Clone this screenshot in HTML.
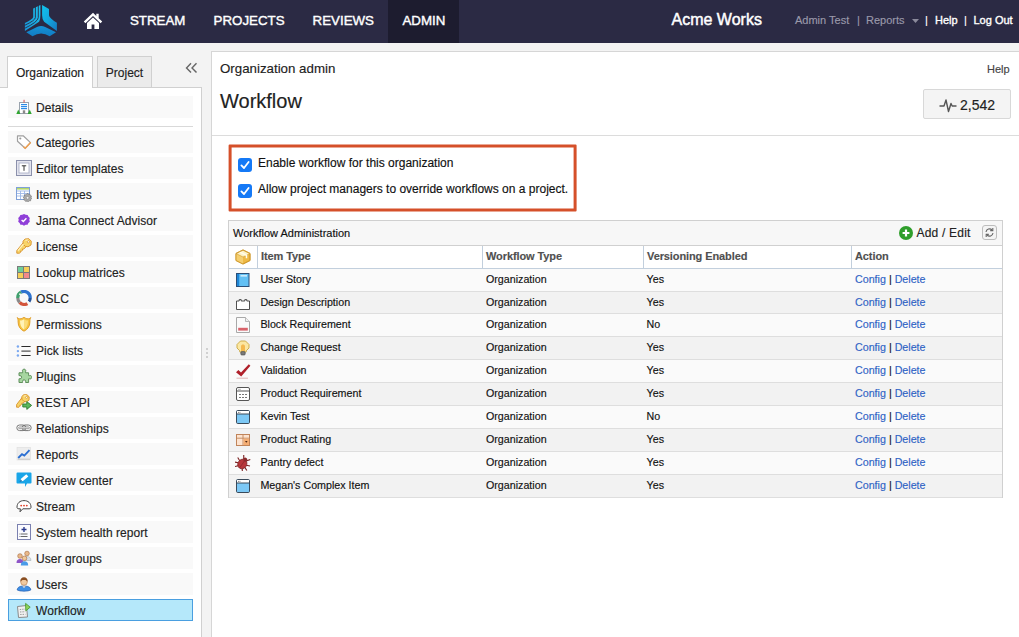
<!DOCTYPE html>
<html lang="en"><head><meta charset="utf-8"><title>Workflow - Organization admin</title>
<style>
*{box-sizing:border-box;margin:0;padding:0}
html,body{width:1019px;height:637px;overflow:hidden}
body{font-family:"Liberation Sans",Arial,sans-serif;background:#f3f3f3;color:#222;position:relative;font-size:12px;-webkit-text-stroke:.15px}
.abs{position:absolute}
#hdr{position:absolute;left:0;top:0;width:1019px;height:43px;background:#2b2a44}
#hdr .nav{position:absolute;top:0;height:43px;line-height:42px;color:#fff;font-size:13.3px;font-weight:normal;-webkit-text-stroke:.4px #fff;white-space:nowrap}
#hdr .act{position:absolute;left:388px;top:0;width:71px;height:43px;background:#1d1c2f}
#hdr .r{position:absolute;top:0;height:43px;line-height:41px;font-size:11px;white-space:nowrap}
.g{color:#9a99aa}.w{color:#fff}
/* sidebar */
#side{position:absolute;left:0;top:87px;width:202px;height:560px;background:#fff;border-top:1px solid #d0d0d0;border-right:1px solid #d0d0d0}
.tab{position:absolute;top:56px;height:31px;border:1px solid #d0d0d0;border-bottom:none;font-size:12px;line-height:32px;text-align:center;color:#222}
#t1{left:7px;width:86px;background:#fff;height:32px;z-index:2}
#t2{left:97px;width:55px;background:#ebebeb}
.it{position:absolute;left:8px;width:185px;height:22px;background:#f9f9f9;font-size:12px;letter-spacing:.05px;line-height:25px;padding-left:28px;color:#222;white-space:nowrap}
.it svg{position:absolute;left:8px;top:3px;width:16px;height:16px}
.it.sel{background:#b5e8fa;border:1px solid #4a9fe0;padding-left:27px;line-height:23px}
.it.sel svg{left:7px;top:2px}
#sep{position:absolute;left:8px;top:126px;width:185px;height:1px;background:#d9d9d9}
/* main */
#main{position:absolute;left:211px;top:51px;width:820px;height:600px;background:#fff;border:1px solid #d6d6d6}
#mline{position:absolute;left:212px;top:135px;width:807px;height:1px;background:#dcdcdc}
#redbox{position:absolute;left:229px;top:145px;width:348px;height:67px;border:3px solid #d5502a;border-radius:1px;transform:translate(-.4px,-.6px)}
.cb{position:absolute;left:238px;width:14px;height:14px;border-radius:3px;background:#1579f6}
.cb svg{position:absolute;left:0;top:0}
.cl{position:absolute;left:258px;font-size:12px;color:#111;white-space:nowrap}
/* grid */
#grid{position:absolute;left:228px;top:220px;width:775px;height:278px;border:1px solid #d0d0d0;background:#fff}
#gtitle{position:absolute;left:0;top:0;width:773px;height:25px;background:#f7f7f7;border-bottom:1px solid #d0d0d0;font-size:11px;line-height:24px;padding-left:4px;color:#111}
#ghead{position:absolute;left:0;top:25px;width:773px;height:23px;background:#fff;border-bottom:1px solid #c2cfdd}
.hc{position:absolute;top:0;height:22px;line-height:21px;font-size:11px;font-weight:bold;color:#505050;padding-left:3px;border-left:1px solid #c2cfdd;letter-spacing:-.1px}
.row{position:absolute;left:0;width:773px;border-bottom:1px solid #dedede;font-size:10.7px;color:#111}
.row.a{background:#fafafa}.row.b{background:#f2f2f2}
.row span{position:absolute;top:0;line-height:20px;white-space:nowrap}
.row svg{position:absolute;left:6px;top:3px;width:16px;height:16px}
.lnk{color:#2f63c5}
</style></head><body>
<div id="hdr">
 <div class="act"></div>
 <svg class="abs" style="left:20px;top:0px" width="44" height="42" viewBox="0 0 44 42">
  <defs><linearGradient id="lg1" x1="0" y1="0" x2="1" y2="1"><stop offset="0" stop-color="#10c4ee"/><stop offset=".5" stop-color="#14a6de"/><stop offset="1" stop-color="#1479c2"/></linearGradient>
  <linearGradient id="lg3" x1="1" y1="0" x2="0" y2="1"><stop offset="0" stop-color="#1cc2ee"/><stop offset="1" stop-color="#1795d8"/></linearGradient>
  <linearGradient id="lg2" x1="0" y1="0" x2="0" y2="1"><stop offset="0" stop-color="#1692d6"/><stop offset="1" stop-color="#117cc4"/></linearGradient></defs>
  <path d="M22.1 4.9 L29 8.9 V15.2 Q29.2 18 36.9 22.8 V31 L24.1 21.8 Q22.1 19.5 22.1 15.2 Z" fill="url(#lg1)"/>
  <path d="M20.4 4.9 L13.2 8.6 V17 Q13 19 4.9 23.1 V31 L19.1 21.8 Q20.4 19.5 20.4 15.2 Z" fill="url(#lg3)"/>
  <path d="M15.4 6.5 V17.5 Q15.2 20.5 4.5 25.4 M18.3 5 V17.5 Q18 22 4.5 28.4" fill="none" stroke="#2b2a44" stroke-width=".9"/>
  <path d="M6.3 32.3 L17 27 Q21.1 25 25.2 27 L36 32.3 L29.7 36.3 Q21.1 30.5 12.5 36.3 Z" fill="url(#lg2)"/>
 </svg>
 <svg class="abs" style="left:83px;top:12px" width="20" height="18" viewBox="0 0 20 18"><path d="M10 0.8 L0.8 9.5 L2.4 11.2 L10 4 L17.6 11.2 L19.2 9.5 L15.7 6.2 V1.8 H13.3 V3.9 Z" fill="#fff"/><path d="M10 5.4 L4 11 V17 H8.6 V12.4 H11.4 V17 H16 V11 Z" fill="#fff"/></svg>
 <div class="nav" style="left:130px">STREAM</div>
 <div class="nav" style="left:213.6px">PROJECTS</div>
 <div class="nav" style="left:312.6px">REVIEWS</div>
 <div class="nav" style="left:402.5px">ADMIN</div>
 <div class="nav" style="left:671.5px;font-size:16px;line-height:40px;-webkit-text-stroke:.45px #fff">Acme Works</div>
 <div class="r g" style="left:795px">Admin Test</div>
 <div class="r g" style="left:857px">|</div>
 <div class="r g" style="left:866px">Reports</div>
 <svg class="abs" style="left:911.5px;top:18.5px" width="7" height="4" viewBox="0 0 7 4"><path d="M0 0H7L3.5 4Z" fill="#8b8a9c"/></svg>
 <div class="r w" style="left:925px">|</div>
 <div class="r w" style="left:935px;-webkit-text-stroke:.35px #fff">Help</div>
 <div class="r w" style="left:964px">|</div>
 <div class="r w" style="left:973.5px;-webkit-text-stroke:.35px #fff">Log Out</div>
</div>

<div class="tab" id="t1">Organization</div>
<div class="tab" id="t2">Project</div>
<svg class="abs" style="left:185px;top:62px" width="13" height="12" viewBox="0 0 13 12"><path d="M6 1.2L1.5 5.9L6 10.6M11.5 1.2L7 5.9L11.5 10.6" fill="none" stroke="#666" stroke-width="1.4"/></svg>
<div id="side"></div>
<div id="sep"></div>
<div class="it" style="top:96px"><svg viewBox="0 0 16 16" ><rect x="3.5" y="3.5" width="9" height="11" fill="#fff" stroke="#9aa3ad" stroke-width="1"/><rect x="5" y="5" width="6" height="1.2" fill="#2f8be6"/><rect x="5" y="7" width="6" height="1.2" fill="#2f8be6"/><rect x="5" y="9" width="6" height="1.2" fill="#2f8be6"/><rect x="6.8" y="11.3" width="2.4" height="3.2" fill="#8a8a8a"/><path d="M0.3 15L2.3 10.5L4.3 15Z" fill="#2fa52f"/><path d="M11.7 15L13.7 10.5L15.7 15Z" fill="#2fa52f"/><rect x="7.6" y="0.8" width=".9" height="2.6" fill="#d33"/></svg>Details</div>
<div class="it" style="top:131px"><svg viewBox="0 0 16 16" ><path d="M1.5 1.8H7.2L14.5 8.6L9.2 14.3L1.5 7.2Z" fill="#fff" stroke="#a0a0a0" stroke-width="1.2" stroke-linejoin="round"/><path d="M14.3 8.8L9.2 14.3L7.8 13" fill="none" stroke="#f0a050" stroke-width="1.5" stroke-linecap="round"/><circle cx="4.3" cy="4.5" r="1.1" fill="#999"/></svg>Categories</div>
<div class="it" style="top:157px"><svg viewBox="0 0 16 16" ><rect x="0.5" y="0.5" width="15" height="15" fill="#e3e4ee" stroke="#8b90ab"/><rect x="3" y="3" width="10" height="10" fill="#fff" stroke="#a3a8c0" stroke-width=".8"/><path d="M5.8 5.8H10.2M8 5.8V10.8" stroke="#333" stroke-width="1" fill="none"/></svg>Editor templates</div>
<div class="it" style="top:183px"><svg viewBox="0 0 16 16" ><rect x="0.5" y="1.5" width="13" height="12" fill="#fff" stroke="#7fa0d8"/><rect x="1" y="2" width="12" height="1.6" fill="#b5d86a"/><path d="M1 5H13M1 7.5H13M1 10H13M4.5 5V13M8.5 5V13" stroke="#9db8e8" stroke-width=".9"/><path d="M11.5 7.2L12.4 8.3L13.8 8L14.2 9.4L15.5 10L15 11.3L15.8 12.5L14.7 13.4L14.6 14.8L13.2 14.8L12.2 15.8L11 15L9.7 15.5L9 14.3L7.7 13.8L8 12.4L7.3 11.2L8.4 10.3L8.5 8.9L9.9 8.8Z" fill="#aaa" stroke="#6e6e6e" stroke-width=".6"/><circle cx="11.6" cy="11.8" r="1.4" fill="#f0f0f0" stroke="#777" stroke-width=".5"/></svg>Item types</div>
<div class="it" style="top:209px"><svg viewBox="0 0 16 16" ><path d="M8 2L9.7 2.8L11.6 2.9L12.4 4.6L13.8 5.9L13.3 7.8L13.8 9.7L12.4 11L11.6 12.7L9.7 12.8L8 13.8L6.3 12.8L4.4 12.7L3.6 11L2.2 9.7L2.7 7.8L2.2 5.9L3.6 4.6L4.4 2.9L6.3 2.8Z" fill="#8f3fd8"/><path d="M5.6 8L7.3 9.6L10.4 6.3" fill="none" stroke="#fff" stroke-width="1.4"/></svg>Jama Connect Advisor</div>
<div class="it" style="top:235px"><svg viewBox="0 0 16 16" ><path d="M7.6 4.2L0.8 12.6V15.2H3.6L4.4 14.4V13.1H5.7L6.5 12.3V11H7.8L10.8 8.2Z" fill="#f8d468" stroke="#d8922c" stroke-width=".9" stroke-linejoin="round"/><path d="M9 1L12.8 0.7L15.3 3.2L15 7L12 8.8L9.4 8.4L7.2 6.2L7 3.2Z" fill="#f8d468" stroke="#d8922c" stroke-width=".9" stroke-linejoin="round"/><path d="M9.4 2.2L12.2 2M7.6 5.8L2 12.6" fill="none" stroke="#fff3c4" stroke-width="1.1"/><circle cx="12.4" cy="3.8" r="1.1" fill="#fff" stroke="#d8922c" stroke-width=".7"/></svg>License</div>
<div class="it" style="top:261px"><svg viewBox="0 0 16 16" ><rect x="1" y="2" width="13" height="13" fill="#7a7a7a"/><rect x="2" y="3" width="5" height="5" fill="#6fcf9a"/><rect x="8" y="3" width="5" height="5" fill="#f6cf58"/><rect x="2" y="9" width="5" height="5" fill="#f6cf58"/><rect x="8" y="9" width="5" height="5" fill="#f28a8a"/></svg>Lookup matrices</div>
<div class="it" style="top:287px"><svg viewBox="0 0 16 16" ><path d="M5 2.2A6.2 6.2 0 0 1 14.2 8" fill="none" stroke="#2f74cf" stroke-width="3.2"/><path d="M14.2 8A6.2 6.2 0 0 1 13 11.6" fill="none" stroke="#26549a" stroke-width="3.2"/><path d="M11.4 13.6A6.2 6.2 0 0 1 3.6 12.4" fill="none" stroke="#d3553c" stroke-width="3.2"/><path d="M3.6 12.4A6.2 6.2 0 0 1 1.8 8" fill="none" stroke="#8a8a8a" stroke-width="3.2"/><path d="M1.8 8A6.2 6.2 0 0 1 5 2.2" fill="none" stroke="#3fa06d" stroke-width="3.2"/><path d="M3.4 3.6L12.6 12.6" stroke="#f7f7f7" stroke-width="1.6"/></svg>OSLC</div>
<div class="it" style="top:313px"><svg viewBox="0 0 16 16" ><path d="M1.2 1.6C2.4 2.6 3 2.8 4 2.8C5.5 2.8 6.8 2.2 8 1.2C9.2 2.2 10.5 2.8 12 2.8C13 2.8 13.6 2.6 14.8 1.6C14 3 13.9 4 13.9 6C13.9 10.5 11.5 13.6 8 15.2C4.5 13.6 2.1 10.5 2.1 6C2.1 4 2 3 1.2 1.6Z" fill="#f6c544" stroke="#df9a24" stroke-width=".9" stroke-linejoin="round"/><path d="M8 3.2C6.9 4 5.6 4.5 4 4.5C3.9 9 5.3 11.8 8 13.4Z" fill="#fff2b8"/><path d="M8 3.2C9.1 4 10.4 4.5 12 4.5C12.1 9 10.7 11.8 8 13.4Z" fill="#fbdc7a"/></svg>Permissions</div>
<div class="it" style="top:339px"><svg viewBox="0 0 16 16" ><circle cx="1.9" cy="4.5" r="1.2" fill="#7aa8f0"/><circle cx="1.9" cy="9.1" r="1.2" fill="#7aa8f0"/><circle cx="1.9" cy="13.5" r="1.2" fill="#7aa8f0"/><path d="M5.4 4.5H14.6M5.4 9.1H14.6M5.4 13.5H14.6" stroke="#2a2a2a" stroke-width="1"/></svg>Pick lists</div>
<div class="it" style="top:365px"><svg viewBox="0 0 16 16" ><path d="M3 4.8H6.6V3.6A1.7 1.7 0 1 1 9.6 3.6V4.8H12.6V7.6H13.6A1.7 1.7 0 1 1 13.6 10.8H12.6V14.5H9.6V13.3A1.5 1.5 0 1 0 6.6 13.3V14.5H3V10.8H4A1.6 1.6 0 1 0 4 7.6H3Z" fill="#a6d6a0" stroke="#5f8f5c" stroke-width="1" stroke-linejoin="round"/></svg>Plugins</div>
<div class="it" style="top:391px"><svg viewBox="0 0 16 16" ><path d="M6 3.6L0.6 10.6V13.2H3L3.8 12.4V11.2H5L5.8 10.4V9.2H7L9.4 7Z" fill="#f8d468" stroke="#d8922c" stroke-width=".9" stroke-linejoin="round"/><path d="M7.4 0.8L10.8 0.6L13.2 2.8L13 6.2L10.4 7.8L8 7.4L6 5.4L5.8 2.8Z" fill="#f8d468" stroke="#d8922c" stroke-width=".9" stroke-linejoin="round"/><path d="M7.8 2L10.2 1.8" fill="none" stroke="#fff3c4" stroke-width="1"/><circle cx="10.6" cy="3.4" r="1" fill="#fff" stroke="#d8922c" stroke-width=".7"/><path d="M6.8 10H10.8V7.6L15.6 11.4L10.8 15.4V13H6.8Z" fill="#5cb85c" stroke="#2c7a30" stroke-width=".9" stroke-linejoin="round"/></svg>REST API</div>
<div class="it" style="top:417px"><svg viewBox="0 0 16 16" ><rect x="0.8" y="5" width="9" height="5.6" rx="2.8" fill="#fff" stroke="#777" stroke-width="1"/><rect x="6.2" y="5" width="9" height="5.6" rx="2.8" fill="none" stroke="#777" stroke-width="1"/><rect x="2.6" y="6.9" width="10.8" height="1.8" rx=".9" fill="#eee" stroke="#777" stroke-width=".7"/></svg>Relationships</div>
<div class="it" style="top:443px"><svg viewBox="0 0 16 16" ><rect x="1" y="1.5" width="13.5" height="12.5" fill="#ededed" stroke="#dcdcdc" stroke-width=".6"/><path d="M2.2 12L6 8.2L8.3 9.6L13.5 4.2" fill="none" stroke="#2b6fd2" stroke-width="1.9"/><path d="M2 13.2H14" stroke="#bdbdbd" stroke-width=".8"/></svg>Reports</div>
<div class="it" style="top:469px"><svg viewBox="0 0 16 16" ><path d="M1.5 0.5H14.5A1 1 0 0 1 15.5 1.5V10.5A1 1 0 0 1 14.5 11.5H11L9 15V11.5H1.5A1 1 0 0 1 0.5 10.5V1.5A1 1 0 0 1 1.5 0.5Z" fill="#19a5e8"/><path d="M4.2 9.5L5 6.8L10.3 2.2L12.3 4.4L7 9Z" fill="#fff"/><path d="M3.5 10L4.8 7.6L6.3 9.2Z" fill="#0b6aa8"/></svg>Review center</div>
<div class="it" style="top:495px"><svg viewBox="0 0 16 16" ><path d="M1 9.2C1 5 4 2.6 8 2.6C12 2.6 15 5 15 9.2C15 10.2 14.4 10.8 13 10.8H6.8L4 13.8L4.4 10.8H3C1.6 10.8 1 10.2 1 9.2Z" fill="#fff" stroke="#444" stroke-width="1" stroke-linejoin="round"/><circle cx="5.2" cy="7.6" r=".95" fill="#e0442c"/><circle cx="8" cy="7.6" r=".95" fill="#e0442c"/><circle cx="10.8" cy="7.6" r=".95" fill="#e0442c"/></svg>Stream</div>
<div class="it" style="top:521px"><svg viewBox="0 0 16 16" ><rect x="1.5" y="0.5" width="13" height="15" fill="#fbfbff" stroke="#7a80b0"/><path d="M8 3V8M5.5 5.5H10.5" stroke="#2b3a8c" stroke-width="1.4"/><path d="M5 10H11.5M5 12.5H11.5" stroke="#666" stroke-width="1"/><rect x="3.5" y="9.5" width="1" height="1" fill="#666"/><rect x="3.5" y="12" width="1" height="1" fill="#666"/></svg>System health report</div>
<div class="it" style="top:547px"><svg viewBox="0 0 16 16" ><circle cx="4" cy="6" r="2.3" fill="#e9b98a" stroke="#a5683a" stroke-width=".6"/><path d="M0.5 13C0.5 10 2 9 4 9C6 9 7.5 10 7.5 13Z" fill="#8e55c7"/><circle cx="11" cy="3.5" r="2.3" fill="#e9b98a" stroke="#a5683a" stroke-width=".6"/><path d="M7.8 10.5C7.8 7.5 9 6.5 11 6.5C13 6.5 15 7.5 15 10.5Z" fill="#d8dde6" stroke="#9aa" stroke-width=".5"/><circle cx="8.5" cy="8.3" r="2.3" fill="#f0c79a" stroke="#a5683a" stroke-width=".6"/><path d="M4.8 15.5C4.8 12.5 6.3 11.3 8.5 11.3C10.7 11.3 12.2 12.5 12.2 15.5Z" fill="#4a9be8"/></svg>User groups</div>
<div class="it" style="top:573px"><svg viewBox="0 0 16 16" ><path d="M1.2 14C1.4 11.2 3.8 10 8 10C12.2 10 14.6 11.2 14.8 14C12.2 15.6 3.8 15.6 1.2 14Z" fill="#3f8fe6" stroke="#245fb0" stroke-width=".7"/><circle cx="8" cy="6" r="3.3" fill="#f1c9a0" stroke="#b57848" stroke-width=".6"/><path d="M4.4 5.8C4 2.8 5.8 1.2 8 1.2C10.2 1.2 12 2.8 11.6 5.8C10.6 4.4 9.6 4 8 4C6.4 4 5.4 4.4 4.4 5.8Z" fill="#8a4f22"/><path d="M6.2 10.2L8 12L9.8 10.2Z" fill="#f7e4d2"/></svg>Users</div>
<div class="it sel" style="top:599px"><svg viewBox="0 0 16 16" ><path d="M1.5 4.5L10.5 3.5L11.5 15L2.5 15.5Z" fill="#f1f1f1" stroke="#8a8a8a" stroke-linejoin="round"/><path d="M3.8 7.5L9 7.1M4 10L9.2 9.7M4.2 12.5L9.4 12.3" stroke="#999" stroke-width="1" stroke-dasharray="1.4 1"/><path d="M9.6 1.4L14.2 5.2L9.8 8.8Z" fill="#8fd45a" stroke="#4a9a30" stroke-width=".9" stroke-linejoin="round"/></svg>Workflow</div>


<div class="abs" style="left:205.5px;top:348px;width:2px;height:2px;background:#c4c4c4;box-shadow:0 4px 0 #c4c4c4,0 8px 0 #c4c4c4;border-radius:1px"></div>
<div id="main"></div>
<div class="abs" style="left:220px;top:61px;font-size:13.3px;color:#222;white-space:nowrap">Organization admin</div>
<div class="abs" style="left:220px;top:90px;font-size:20px;color:#222;white-space:nowrap">Workflow</div>
<div class="abs" style="left:987px;top:63px;font-size:11px;color:#444">Help</div>
<div class="abs" style="left:923px;top:89px;width:88px;height:30px;background:#f4f4f4;border:1px solid #d8d8d8;border-radius:2px"></div>
<svg class="abs" style="left:939px;top:97.5px" width="18" height="15" viewBox="0 0 18 15"><path d="M0.5 8H5L7 2L9.5 13.5L12 5.5L13.2 8H17.5" fill="none" stroke="#555" stroke-width="1.4" stroke-linejoin="round"/></svg>
<div class="abs" style="left:960px;top:97px;font-size:14px;color:#222">2,542</div>
<div id="mline"></div>
<div id="redbox"></div>
<div class="cb" style="top:158px"><svg width="14" height="14" viewBox="0 0 14 14"><path d="M3.4 7.4L6 10L10.6 4" fill="none" stroke="#fff" stroke-width="1.8" stroke-linecap="round" stroke-linejoin="round"/></svg></div>
<div class="cb" style="top:184px"><svg width="14" height="14" viewBox="0 0 14 14"><path d="M3.4 7.4L6 10L10.6 4" fill="none" stroke="#fff" stroke-width="1.8" stroke-linecap="round" stroke-linejoin="round"/></svg></div>
<div class="cl" style="top:156px">Enable workflow for this organization</div>
<div class="cl" style="top:182px">Allow project managers to override workflows on a project.</div>

<div id="grid">
 <div id="gtitle">Workflow Administration</div>
 <svg class="abs" style="left:669px;top:4px" width="16" height="16" viewBox="0 0 16 16"><circle cx="8" cy="8" r="7" fill="#2f9e2b"/><path d="M8 4.6V11.4M4.6 8H11.4" stroke="#fff" stroke-width="2.2"/></svg>
 <div class="abs" style="left:687.5px;top:5px;font-size:12px;color:#222;white-space:nowrap;letter-spacing:.2px">Add / Edit</div>
 <div class="abs" style="left:753px;top:4px;width:15px;height:15px;border:1px solid #bdbdbd;border-radius:3px;background:#f4f4f4"></div>
 <svg class="abs" style="left:755px;top:6px" width="11" height="11" viewBox="0 0 11 11"><path d="M2 5A3.5 3.5 0 0 1 8 3M9 6A3.5 3.5 0 0 1 3 8" fill="none" stroke="#666" stroke-width="1.1"/><path d="M6.2 3.6H8.8V1M4.8 7.4H2.2V10" fill="none" stroke="#666" stroke-width="1.1"/></svg>
 <div id="ghead">
  <svg class="abs" style="left:6px;top:3px" width="16" height="16" viewBox="0 0 16 16"><path d="M8 1L15 4.5V11.5L8 15L1 11.5V4.5Z" fill="#eeb945" stroke="#d09a2c" stroke-width=".9" stroke-linejoin="round"/><path d="M1 4.5L8 8V15L1 11.5Z" fill="#f5cf70"/><path d="M1 4.5L8 8L15 4.5L8 1Z" fill="#fdf1c4" stroke="#d09a2c" stroke-width=".6" stroke-linejoin="round"/><path d="M4.5 2.8L11.5 6.3V9.2" fill="none" stroke="#fffbe8" stroke-width="1.5"/><path d="M8 1L15 4.5V11.5L8 15L1 11.5V4.5Z" fill="none" stroke="#d09a2c" stroke-width=".9" stroke-linejoin="round"/></svg>
  <div class="hc" style="left:28px;width:225px">Item Type</div>
  <div class="hc" style="left:253px;width:161px">Workflow Type</div>
  <div class="hc" style="left:414px;width:208px">Versioning Enabled</div>
  <div class="hc" style="left:622px;width:151px">Action</div>
 </div>
<div class="row a" style="top:48px;height:23px"><svg viewBox="0 0 16 16" ><rect x="1.5" y="1.5" width="12.5" height="13" fill="#62c0f4" stroke="#2b4f78"/><rect x="2" y="2" width="2.2" height="12" fill="#1f86d6"/><rect x="5.5" y="3.2" width="6.5" height="1.3" fill="#e4f4fd"/></svg><span style="left:31.4px">User Story</span><span style="left:257px">Organization</span><span style="left:417.6px">Yes</span><span style="left:626px"><span class="lnk" style="position:static">Config</span> | <span class="lnk" style="position:static">Delete</span></span></div>
<div class="row b" style="top:71px;height:22px"><svg viewBox="0 0 16 16" ><path d="M1.5 14.5V6H4.2V4.6H6.2V6H9.8V4.6H11.8V6H14.5V14.5Z" fill="#fff" stroke="#3c3c3c" stroke-width=".9" stroke-linejoin="round"/></svg><span style="left:31.4px">Design Description</span><span style="left:257px">Organization</span><span style="left:417.6px">Yes</span><span style="left:626px"><span class="lnk" style="position:static">Config</span> | <span class="lnk" style="position:static">Delete</span></span></div>
<div class="row a" style="top:93px;height:23px"><svg viewBox="0 0 16 16" ><path d="M1.5 0.5H10.5L14.5 4.5V15.5H1.5Z" fill="#fafafa" stroke="#a8a8a8" stroke-linejoin="round"/><path d="M10.5 0.5V4.5H14.5" fill="#f0f0f0" stroke="#a8a8a8" stroke-width=".8"/><rect x="3.2" y="10.8" width="9.6" height="2.8" fill="#d8626a"/></svg><span style="left:31.4px">Block Requirement</span><span style="left:257px">Organization</span><span style="left:417.6px">No</span><span style="left:626px"><span class="lnk" style="position:static">Config</span> | <span class="lnk" style="position:static">Delete</span></span></div>
<div class="row b" style="top:116px;height:23px"><svg viewBox="0 0 16 16" ><path d="M5.5 1H10.5L14 4.5V8L11.2 10.8V12H4.8V10.8L2 8V4.5Z" fill="#fbe7a2" stroke="#c9a640" stroke-width=".9" stroke-linejoin="round"/><path d="M6 6.5C6 5.2 7 4.6 8 4.6C9 4.6 10 5.2 10 6.5V11H6Z" fill="#f4b94e"/><rect x="5.8" y="11.6" width="4.4" height="3.4" rx="1" fill="#7a7a7a" stroke="#444" stroke-width=".6"/></svg><span style="left:31.4px">Change Request</span><span style="left:257px">Organization</span><span style="left:417.6px">Yes</span><span style="left:626px"><span class="lnk" style="position:static">Config</span> | <span class="lnk" style="position:static">Delete</span></span></div>
<div class="row a" style="top:139px;height:23px"><svg viewBox="0 0 16 16" ><path d="M1 9.2L3.4 7L6 9.6L13.8 1.2L15.4 2.8L6.2 13.6Z" fill="#b0202a"/><path d="M1.5 15.2H13" stroke="#d9a5a5" stroke-width=".8"/></svg><span style="left:31.4px">Validation</span><span style="left:257px">Organization</span><span style="left:417.6px">Yes</span><span style="left:626px"><span class="lnk" style="position:static">Config</span> | <span class="lnk" style="position:static">Delete</span></span></div>
<div class="row b" style="top:162px;height:23px"><svg viewBox="0 0 16 16" ><rect x="1.5" y="1.5" width="13" height="13" rx="1.5" fill="#fff" stroke="#555"/><path d="M1.5 5H14.5" stroke="#555"/><path d="M3.5 3.3H5.5" stroke="#555" stroke-width=".9" stroke-dasharray="1 .6"/><path d="M4 8.5H12M4 11.5H12" stroke="#777" stroke-width="1" stroke-dasharray="2 1"/></svg><span style="left:31.4px">Product Requirement</span><span style="left:257px">Organization</span><span style="left:417.6px">Yes</span><span style="left:626px"><span class="lnk" style="position:static">Config</span> | <span class="lnk" style="position:static">Delete</span></span></div>
<div class="row a" style="top:185px;height:23px"><svg viewBox="0 0 16 16" ><rect x="1.5" y="1.5" width="13" height="13" rx="1.2" fill="#7cc8f5" stroke="#3a4a5a"/><rect x="2" y="2" width="12" height="3" fill="#fff"/><path d="M1.5 5H14.5" stroke="#3a4a5a"/><path d="M3.3 3.4H5.3" stroke="#444" stroke-width=".9" stroke-dasharray="1 .6"/></svg><span style="left:31.4px">Kevin Test</span><span style="left:257px">Organization</span><span style="left:417.6px">No</span><span style="left:626px"><span class="lnk" style="position:static">Config</span> | <span class="lnk" style="position:static">Delete</span></span></div>
<div class="row b" style="top:208px;height:23px"><svg viewBox="0 0 16 16" ><rect x="1.5" y="2.5" width="13" height="11" fill="#fde3cf" stroke="#c0845a"/><path d="M1.5 6.2H14.5M8 2.5V13.5" stroke="#c0845a" stroke-width=".9"/><rect x="8.5" y="6.7" width="5.5" height="6.3" fill="#f5ad72"/><path d="M10 9L12.6 9L11.3 10.7Z" fill="#4a2510"/></svg><span style="left:31.4px">Product Rating</span><span style="left:257px">Organization</span><span style="left:417.6px">Yes</span><span style="left:626px"><span class="lnk" style="position:static">Config</span> | <span class="lnk" style="position:static">Delete</span></span></div>
<div class="row a" style="top:231px;height:23px"><svg viewBox="0 0 16 16" ><g transform="rotate(35 8 8)"><path d="M4 1L6.5 4.5M12 1L9.5 4.5M0.5 6.5L4 8M15.5 6.5L12 8M0.5 12L4 10.5M15.5 12L12 10.5M3.5 15.5L5.5 13M12.5 15.5L10.5 13" stroke="#7a2020" stroke-width="1.1"/><ellipse cx="8" cy="9.2" rx="4.4" ry="5" fill="#b7363a" stroke="#7a2020" stroke-width=".7"/><circle cx="8" cy="4" r="2" fill="#8a2a2c"/><path d="M8 5V14" stroke="#8a2a2c" stroke-width=".7"/></g></svg><span style="left:31.4px">Pantry defect</span><span style="left:257px">Organization</span><span style="left:417.6px">Yes</span><span style="left:626px"><span class="lnk" style="position:static">Config</span> | <span class="lnk" style="position:static">Delete</span></span></div>
<div class="row b" style="top:254px;height:23px"><svg viewBox="0 0 16 16" ><rect x="1.5" y="1.5" width="13" height="13" rx="1.2" fill="#7cc8f5" stroke="#3a4a5a"/><rect x="2" y="2" width="12" height="3" fill="#fff"/><path d="M1.5 5H14.5" stroke="#3a4a5a"/><path d="M3.3 3.4H5.3" stroke="#444" stroke-width=".9" stroke-dasharray="1 .6"/></svg><span style="left:31.4px">Megan's Complex Item</span><span style="left:257px">Organization</span><span style="left:417.6px">Yes</span><span style="left:626px"><span class="lnk" style="position:static">Config</span> | <span class="lnk" style="position:static">Delete</span></span></div>
</div>
</body></html>
